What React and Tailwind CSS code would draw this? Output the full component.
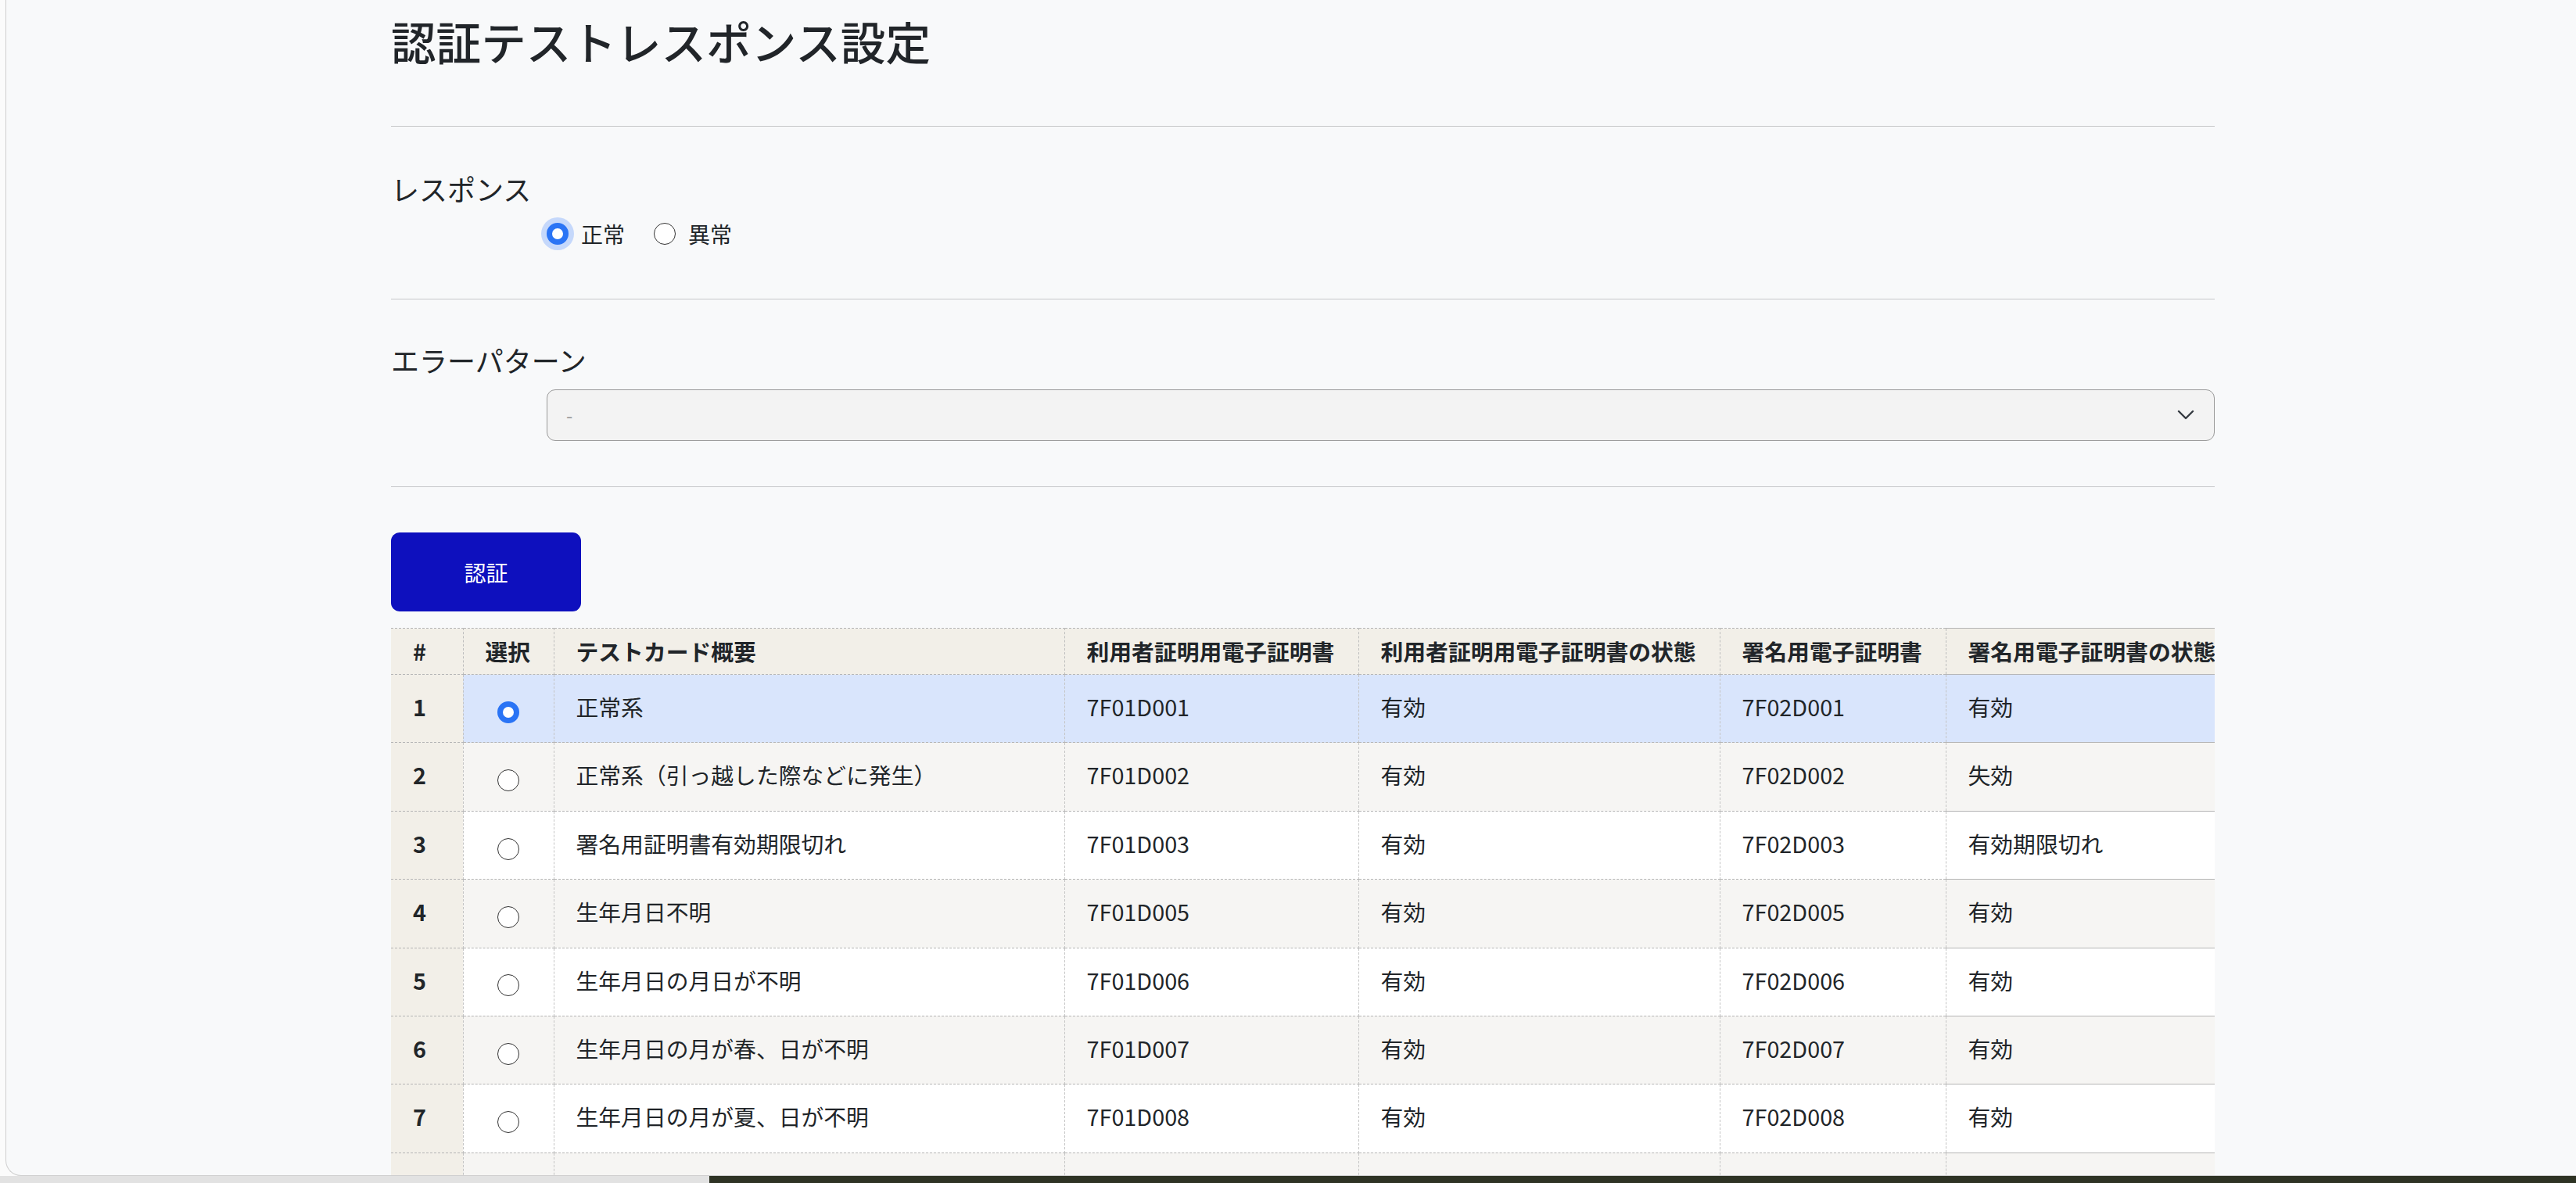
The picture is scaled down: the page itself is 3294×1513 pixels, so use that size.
const rows = [
  { no: 1, name: '正常系', userCert: '7F01D001', userState: '有効', signCert: '7F02D001', signState: '有効' },
  { no: 2, name: '正常系（引っ越した際などに発生）', userCert: '7F01D002', userState: '有効', signCert: '7F02D002', signState: '失効' },
  { no: 3, name: '署名用証明書有効期限切れ', userCert: '7F01D003', userState: '有効', signCert: '7F02D003', signState: '有効期限切れ' },
  { no: 4, name: '生年月日不明', userCert: '7F01D005', userState: '有効', signCert: '7F02D005', signState: '有効' },
  { no: 5, name: '生年月日の月日が不明', userCert: '7F01D006', userState: '有効', signCert: '7F02D006', signState: '有効' },
  { no: 6, name: '生年月日の月が春、日が不明', userCert: '7F01D007', userState: '有効', signCert: '7F02D007', signState: '有効' },
  { no: 7, name: '生年月日の月が夏、日が不明', userCert: '7F01D008', userState: '有効', signCert: '7F02D008', signState: '有効' },
  // 8行目は画面下端で切れていて中身は見えない
  { no: 8, name: '', userCert: '', userState: '', signCert: '', signState: '', hidden: true },
];

const radioClass =
  'appearance-none m-0 w-7 h-7 shrink-0 rounded-full border-[1.5px] border-[#333] bg-white checked:border-[7.5px] checked:border-[#2a74f5]';

const thClass = 'border-y border-r border-y-[#b5b5b5] border-r-[#bdbdbd] border-dashed px-7 text-left whitespace-nowrap';
const tdClass = 'border-b border-r border-b-[#b5b5b5] border-r-[#c4c4c4] border-dashed px-7 pb-[5px] whitespace-nowrap';

function Divider() {
  return <div className="h-px bg-[#c6c7c9]" />;
}

export default function App() {
  const selected = 1;

  return (
    <div className="h-[1513px] overflow-hidden bg-[#fbfbfb] font-['Noto_Sans_CJK_JP',sans-serif] text-[#212529]">
      <div className="ml-[7px] h-[1504px] overflow-hidden rounded-bl-[20px] border-l border-b border-[#cfcfcf] bg-[#f8f9fa]">
        <div className="ml-[492px] w-[2332px] pt-[18px]">
          <h1 className="text-[57.6px] leading-[68px] font-medium">認証テストレスポンス設定</h1>
          <div className="mt-[75px]">
            <Divider />
          </div>

          {/* レスポンス */}
          <div className="mt-[52px] text-[36px] leading-[54px]">レスポンス</div>
          <div className="mt-[10px] ml-[199px] flex h-[42px] items-center text-[28px]">
            <label className="flex items-center">
              <input type="radio" name="response" defaultChecked className={radioClass + ' ring-[7px] ring-[#c5d8fb]'} />
              <span className="ml-4">正常</span>
            </label>
            <label className="ml-[37px] flex items-center">
              <input type="radio" name="response" className={radioClass} />
              <span className="ml-4">異常</span>
            </label>
          </div>
          <div className="mt-[62px]">
            <Divider />
          </div>

          {/* エラーパターン */}
          <div className="mt-[50px] text-[36px] leading-[54px]">エラーパターン</div>
          <div className="relative mt-[11px] ml-[199px]">
            <select
              disabled
              className="block h-[66px] w-full appearance-none rounded-[11px] border border-[#9a9a9a] bg-[#f3f3f3] pl-[24px] text-[24px] text-[#9a9a9a]"
            >
              <option>-</option>
            </select>
            <svg
              className="pointer-events-none absolute right-[26px] top-[26px]"
              width="22"
              height="13"
              viewBox="0 0 22 13"
              fill="none"
            >
              <path d="M2 2 L11 11 L20 2" stroke="#343a40" strokeWidth="2.4" strokeLinecap="round" strokeLinejoin="round" />
            </svg>
          </div>
          <div className="mt-[58px]">
            <Divider />
          </div>

          <button className="mt-[58px] h-[101px] w-[243px] rounded-[11px] bg-[#0e10be] text-[28px] text-white">
            認証
          </button>

          {/* テストカード一覧 */}
          <div className="mt-[21px] overflow-hidden">
            <table className="w-[2420px] table-fixed border-collapse text-[28.8px]">
              <colgroup>
                <col className="w-[92px]" />
                <col className="w-[116px]" />
                <col className="w-[653px]" />
                <col className="w-[376px]" />
                <col className="w-[462px]" />
                <col className="w-[289px]" />
                <col className="w-[432px]" />
              </colgroup>
              <thead>
                <tr className="h-[59px] bg-[#f2efe8] font-bold">
                  <th className={thClass}>#</th>
                  <th className={thClass}>選択</th>
                  <th className={thClass}>テストカード概要</th>
                  <th className={thClass}>利用者証明用電子証明書</th>
                  <th className={thClass}>利用者証明用電子証明書の状態</th>
                  <th className={thClass}>署名用電子証明書</th>
                  <th className="border-y border-y-[#b5b5b5] px-7 text-left whitespace-nowrap">署名用電子証明書の状態</th>
                </tr>
              </thead>
              <tbody>
                {rows.map((r) => {
                  const bg =
                    r.no === selected ? 'bg-[#d9e5fc]' : r.no % 2 === 0 ? 'bg-[#f6f5f3]' : 'bg-white';
                  return (
                    <tr key={r.no} className={'h-[87.4px] ' + bg}>
                      <td className={tdClass + ' bg-[#f2efe8] font-bold'}>{r.hidden ? '' : r.no}</td>
                      <td className="border-b border-r border-b-[#b5b5b5] border-r-[#c4c4c4] border-dashed text-center">
                        {!r.hidden && (
                          <input
                            type="radio"
                            name="card"
                            defaultChecked={r.no === selected}
                            className={radioClass + ' align-middle'}
                          />
                        )}
                      </td>
                      <td className={tdClass}>{r.name}</td>
                      <td className={tdClass}>{r.userCert}</td>
                      <td className={tdClass}>{r.userState}</td>
                      <td className={tdClass}>{r.signCert}</td>
                      <td className="border-b border-b-[#b5b5b5] px-7 pb-[5px] whitespace-nowrap">{r.signState}</td>
                    </tr>
                  );
                })}
              </tbody>
            </table>
          </div>
        </div>
      </div>
      <div className="flex h-[9px]">
        <div className="w-[907px] bg-[#e2e2e2]" />
        <div className="flex-1 bg-[#2e3324]" />
      </div>
    </div>
  );
}
